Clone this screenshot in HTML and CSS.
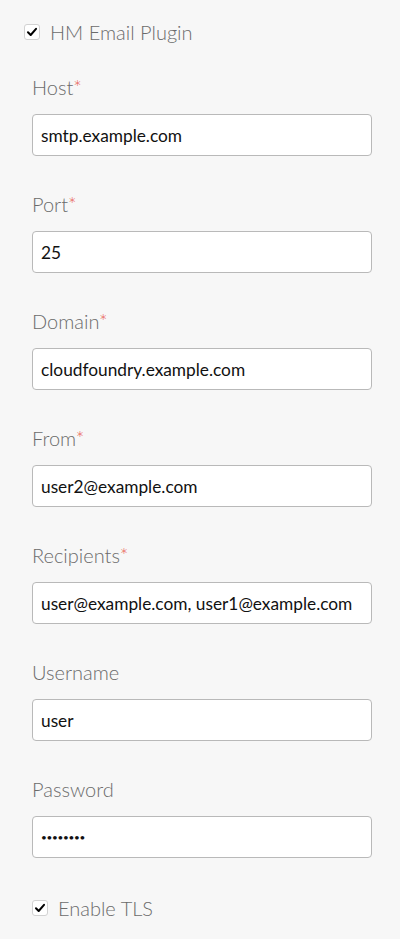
FILE: index.html
```html
<!DOCTYPE html>
<html lang="en">
<head>
<meta charset="utf-8">
<title>HM Email Plugin</title>
<link rel="stylesheet" href="styles.css">
</head>
<body>
<div class="panel">
  <label class="check top-check">
    <span class="box"><svg viewBox="0 0 16 16" width="16" height="16"><path d="M3.4 8.3 L6.5 11.4 L12.6 4.4" fill="none" stroke="#000" stroke-width="2.3" stroke-linecap="round" stroke-linejoin="round"/></svg></span>
    <span class="check-text">HM Email Plugin</span>
  </label>
  <div class="fields">
    <div class="field">
      <label class="label">Host<span class="req">*</span></label>
      <input class="input" type="text" value="smtp.example.com">
    </div>
    <div class="field">
      <label class="label">Port<span class="req">*</span></label>
      <input class="input" type="text" value="25">
    </div>
    <div class="field">
      <label class="label">Domain<span class="req">*</span></label>
      <input class="input" type="text" value="cloudfoundry.example.com">
    </div>
    <div class="field">
      <label class="label">From<span class="req">*</span></label>
      <input class="input" type="text" value="user2@example.com">
    </div>
    <div class="field">
      <label class="label">Recipients<span class="req">*</span></label>
      <input class="input" type="text" value="user@example.com, user1@example.com">
    </div>
    <div class="field">
      <label class="label">Username</label>
      <input class="input" type="text" value="user">
    </div>
    <div class="field">
      <label class="label">Password</label>
      <input class="input password" type="password" value="password">
    </div>
    <label class="check">
      <span class="box"><svg viewBox="0 0 16 16" width="16" height="16"><path d="M3.4 8.3 L6.5 11.4 L12.6 4.4" fill="none" stroke="#000" stroke-width="2.3" stroke-linecap="round" stroke-linejoin="round"/></svg></span>
      <span class="check-text">Enable TLS</span>
    </label>
  </div>
</div>
</body>
</html>
```

FILE: styles.css
```css
html, body {
  margin: 0;
  padding: 0;
  background: #f7f7f7;
}
body {
  font-family: Lato, "Liberation Sans", sans-serif;
  color: #222;
}
.panel {
  padding: 20px 24px 0 24px;
}
.check {
  display: flex;
  align-items: center;
  gap: 10px;
  height: 24px;
}
.box {
  width: 16px;
  height: 16px;
  box-sizing: border-box;
  border: 1px solid #d2d2d2;
  border-radius: 3px;
  background: #fff;
  display: flex;
  align-items: center;
  justify-content: center;
  flex: none;
}
.box svg {
  width: 14px;
  height: 14px;
}
.check-text {
  font-size: 20px;
  font-weight: 300;
  color: #6b6b6b;
  line-height: 24px;
}
.fields {
  padding: 31px 0 0 8px;
  display: flex;
  flex-direction: column;
}
.field {
  display: flex;
  flex-direction: column;
  margin-bottom: 36px;
}
.label {
  font-size: 20px;
  font-weight: 300;
  line-height: 24px;
  color: #6b6b6b;
  margin-bottom: 15px;
}
.req {
  color: #e8584f;
}
.input {
  box-sizing: border-box;
  width: 340px;
  height: 42px;
  border: 1px solid #b9b9b9;
  border-radius: 4px;
  background: #fff;
  padding: 0 8px;
  font-family: Lato, "Liberation Sans", sans-serif;
  font-size: 17.3px;
  color: #111;
  outline: none;
  margin: 0;
}
.password {
  font-size: 10px;
  letter-spacing: -0.3px;
}
.fields .check {
  margin-top: 2px;
}
```
